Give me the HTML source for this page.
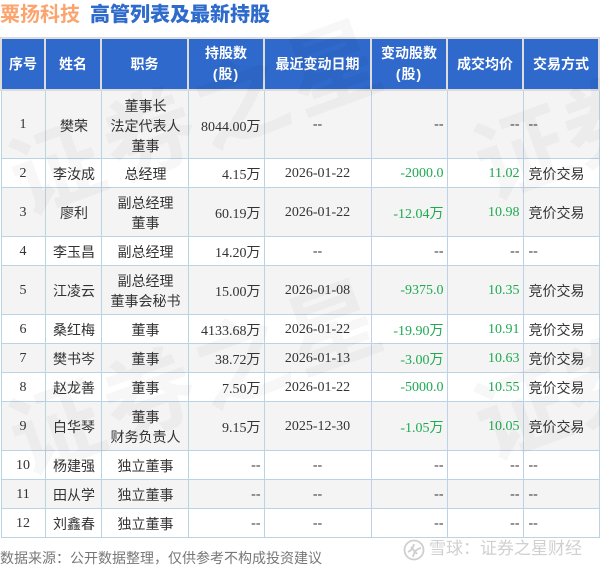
<!DOCTYPE html>
<html lang="zh"><head><meta charset="utf-8"><style>
html,body{margin:0;padding:0;background:#fff}
body{width:600px;height:568px;overflow:hidden;position:relative;font-family:"Liberation Serif","WenQuanYi Zen Hei","Noto Sans CJK SC",serif;font-size:14px;color:#333}
#w{position:absolute;left:0;top:0;width:600px;height:568px;overflow:hidden;filter:blur(.35px)}
.t{position:absolute;left:0;top:2px;font:bold 20px/26px "Liberation Sans","WenQuanYi Zen Hei","Noto Sans CJK SC",sans-serif;white-space:nowrap}
.t i{font-style:normal;color:#fba46e;margin-right:10px}.t b{color:#2f6bcb}
table{position:absolute;left:0;top:37px;border-collapse:collapse;table-layout:fixed;width:599px}
th{background:#2e69cb;color:#fff;border:2px solid #dcdcdc;font-weight:bold;font-family:"Liberation Sans","WenQuanYi Zen Hei","Noto Sans CJK SC",sans-serif;font-size:14px;line-height:21px;padding:0;height:50px;text-align:center}
td{border:1px solid #bcd3e6;padding:6px 3px 0 5px;line-height:20px;text-align:center;white-space:nowrap;overflow:hidden}
tr.g td{background:#f4f4f4}
td.r{text-align:right}td.l{text-align:left}td.u{color:#1faa52;text-align:right}
td.n{padding-top:2px}
tr.a td.n{padding-top:0}
td.c{padding-left:4px;padding-right:4px}
.h1{height:26px}.h2{height:46px}.h3{height:67px}
svg{position:absolute;left:0;top:0;display:block;pointer-events:none}
.f{position:absolute;left:0;top:548px;font:14px/20px "Liberation Sans","WenQuanYi Zen Hei","Noto Sans CJK SC",sans-serif;color:#777;white-space:nowrap}
.x{position:absolute;left:429px;top:537px;font:17px/24px "Liberation Sans","WenQuanYi Zen Hei","Noto Sans CJK SC",sans-serif;color:#d0d0d0;white-space:nowrap}
</style></head><body><div id="w">
<div class="t"><i>粟扬科技</i><b>高管列表及最新持股</b></div>
<table>
<colgroup><col style="width:44px"><col style="width:56px"><col style="width:87px"><col style="width:76px"><col style="width:107px"><col style="width:76px"><col style="width:76px"><col style="width:76px"></colgroup>
<tr><th>序号</th><th>姓名</th><th>职务</th><th>持股数<br><span style="letter-spacing:1px">(股)</span></th><th>最近变动日期</th><th>变动股数<br><span style="letter-spacing:1px">(股)</span></th><th>成交均价</th><th>交易方式</th></tr>
<tr class="g a"><td class="h3 n c">1</td><td>樊荣</td><td>董事长<br>法定代表人<br>董事</td><td class="r">8044.00万</td><td class="n c">--</td><td class="r n">--</td><td class="r n">--</td><td class="l n">--</td></tr>
<tr><td class="h1 n c">2</td><td>李汝成</td><td>总经理</td><td class="r">4.15万</td><td class="n c">2026-01-22</td><td class="u n">-2000.0</td><td class="u n">11.02</td><td class="l">竞价交易</td></tr>
<tr class="g"><td class="h2 n c">3</td><td>廖利</td><td>副总经理<br>董事</td><td class="r">60.19万</td><td class="n c">2026-01-22</td><td class="u">-12.04万</td><td class="u n">10.98</td><td class="l">竞价交易</td></tr>
<tr><td class="h1 n c">4</td><td>李玉昌</td><td>副总经理</td><td class="r">14.20万</td><td class="n c">--</td><td class="r n">--</td><td class="r n">--</td><td class="l n">--</td></tr>
<tr class="g"><td class="h2 n c">5</td><td>江凌云</td><td>副总经理<br>董事会秘书</td><td class="r">15.00万</td><td class="n c">2026-01-08</td><td class="u n">-9375.0</td><td class="u n">10.35</td><td class="l">竞价交易</td></tr>
<tr><td class="h1 n c">6</td><td>桑红梅</td><td>董事</td><td class="r">4133.68万</td><td class="n c">2026-01-22</td><td class="u">-19.90万</td><td class="u n">10.91</td><td class="l">竞价交易</td></tr>
<tr class="g"><td class="h1 n c">7</td><td>樊书岑</td><td>董事</td><td class="r">38.72万</td><td class="n c">2026-01-13</td><td class="u">-3.00万</td><td class="u n">10.63</td><td class="l">竞价交易</td></tr>
<tr><td class="h1 n c">8</td><td>赵龙善</td><td>董事</td><td class="r">7.50万</td><td class="n c">2026-01-22</td><td class="u n">-5000.0</td><td class="u n">10.55</td><td class="l">竞价交易</td></tr>
<tr class="g"><td class="h2 n c">9</td><td>白华琴</td><td>董事<br>财务负责人</td><td class="r">9.15万</td><td class="n c">2025-12-30</td><td class="u">-1.05万</td><td class="u n">10.05</td><td class="l">竞价交易</td></tr>
<tr><td class="h1 n c">10</td><td>杨建强</td><td>独立董事</td><td class="r n">--</td><td class="n c">--</td><td class="r n">--</td><td class="r n">--</td><td class="l n">--</td></tr>
<tr class="g"><td class="h1 n c">11</td><td>田从学</td><td>独立董事</td><td class="r n">--</td><td class="n c">--</td><td class="r n">--</td><td class="r n">--</td><td class="l n">--</td></tr>
<tr><td class="h1 n c">12</td><td>刘鑫春</td><td>独立董事</td><td class="r n">--</td><td class="n c">--</td><td class="r n">--</td><td class="r n">--</td><td class="l n">--</td></tr>
</table>
<svg width="600" height="568" font-family="'Noto Sans CJK SC',sans-serif" font-weight="700" font-size="92" fill="#000" fill-opacity=".03">
<text transform="translate(25,215) rotate(-20)" letter-spacing="6">证券之星</text>
<text transform="translate(25,475) rotate(-20)" letter-spacing="6">证券之星</text>
<text transform="translate(490,200) rotate(-20)">证券</text>
<text transform="translate(490,460) rotate(-20)">证券</text>
</svg>
<div class="f">数据来源：公开数据整理，仅供参考不构成投资建议</div>
<svg width="22" height="22" viewBox="0 0 22 22" fill="none" stroke="#cfcfcf" stroke-width="1.8" style="left:403px;top:539px"><circle cx="11" cy="11" r="9.5"/><path d="M5 13c3-1 5-4 6-8M10 18c1-5 3-8 8-9M8 8l6 7"/></svg>
<div class="x">雪球：证券之星财经</div>
</div></body></html>
